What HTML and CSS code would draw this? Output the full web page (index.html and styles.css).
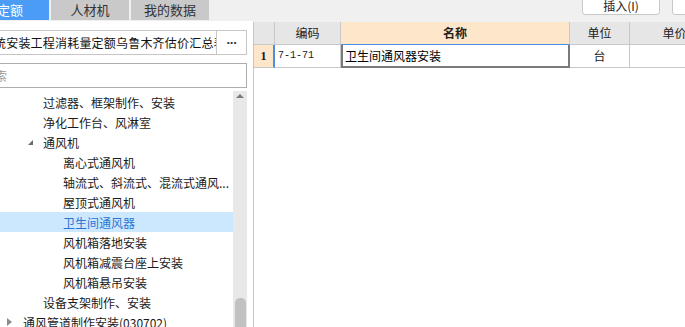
FILE: index.html
```html
<!DOCTYPE html>
<html lang="zh-CN">
<head>
  <meta charset="UTF-8">
  <title>定额库</title>
  <link rel="stylesheet" href="styles.css">
</head>
<body>
  <div class="app">
    <!-- Left: quota library tree -->
    <aside class="side">
      <div class="tabs">
        <span class="tab active">定额</span>
        <span class="tab">人材机</span>
        <span class="tab">我的数据</span>
      </div>

      <div class="picker">
        <div class="combo">统安装工程消耗量定额乌鲁木齐估价汇总表</div>
        <button class="more">···</button>
      </div>

      <div class="search"><span class="placeholder">搜索</span></div>

      <div class="tree-box">
        <ul class="tree">
          <li class="node lv1"><i class="arrow"></i>过滤器、框架制作、安装</li>
          <li class="node lv1"><i class="arrow"></i>净化工作台、风淋室</li>
          <li class="node lv1 open"><i class="arrow"></i>通风机</li>
          <li class="node lv2"><i class="arrow"></i>离心式通风机</li>
          <li class="node lv2"><i class="arrow"></i>轴流式、斜流式、混流式通风...</li>
          <li class="node lv2"><i class="arrow"></i>屋顶式通风机</li>
          <li class="node lv2 selected"><i class="arrow"></i>卫生间通风器</li>
          <li class="node lv2"><i class="arrow"></i>风机箱落地安装</li>
          <li class="node lv2"><i class="arrow"></i>风机箱减震台座上安装</li>
          <li class="node lv2"><i class="arrow"></i>风机箱悬吊安装</li>
          <li class="node lv1"><i class="arrow"></i>设备支架制作、安装</li>
          <li class="node lv0 closed"><i class="arrow"></i>通风管道制作安装(030702)</li>
        </ul>
        <div class="scrollbar">
          <span class="sb-up"></span>
          <span class="sb-thumb"></span>
        </div>
      </div>
    </aside>

    <!-- Right: selected quota items -->
    <main class="main">
      <div class="toolbar">
        <button class="tool-btn">插入(I)</button>
        <button class="tool-btn">替换(R)</button>
      </div>

      <div class="sheet">
        <div class="grid">
          <div class="cell head"></div>
          <div class="cell head">编码</div>
          <div class="cell head current">名称</div>
          <div class="cell head">单位</div>
          <div class="cell head">单价</div>

          <div class="cell rownum">1</div>
          <div class="cell code">7-1-71</div>
          <div class="cell name editing">卫生间通风器安装</div>
          <div class="cell unit">台</div>
          <div class="cell"></div>
        </div>
      </div>
    </main>
  </div>
</body>
</html>
```

FILE: styles.css
```css
body {
  margin: 0;
  font-family: "Noto Sans CJK SC", sans-serif;
  font-size: 12px;
  color: #1a1a1a;
  background: #fff;
  overflow: hidden;
}

.app {
  display: flex;
  width: 685px;
  height: 327px;
  overflow: hidden;
}

/* ---------- left pane ---------- */
.side {
  width: 253px;
  flex: none;
  display: flex;
  flex-direction: column;
  padding-right: 6px;
  box-sizing: border-box;
  background: #fff;
}

.tabs {
  display: flex;
  gap: 2px;
  height: 21px;
  margin-right: -6px;
  margin-left: -29px;
  background: #f0f0f0;
}

.tab {
  width: 78px;
  height: 20px;
  line-height: 19px;
  text-align: center;
  font-size: 13px;
  color: #333;
  background: #c9c9c9;
}

.tab.active {
  background: #4b9cf6;
  color: #fff;
}

.picker {
  display: flex;
  height: 25px;
  margin-top: 9px;
  margin-left: -8px;
}

.combo {
  flex: 1;
  min-width: 0;
  border: 1px solid #c6c6c6;
  padding-left: 1px;
  line-height: 23px;
  letter-spacing: 0.2px;
  white-space: nowrap;
  overflow: hidden;
  color: #111;
}

.more {
  width: 30px;
  border: 1px solid #c6c6c6;
  border-left: none;
  background: #fff;
  padding: 0;
  font-family: "Liberation Sans", sans-serif;
  font-size: 13px;
  font-weight: bold;
  color: #333;
  letter-spacing: -1px;
}

.search {
  height: 25px;
  margin-top: 8px;
  margin-left: -8px;
  border: 1px solid #adadad;
  box-sizing: border-box;
  line-height: 23px;
  font-size: 12px;
  text-indent: -10px;
  overflow: hidden;
  white-space: nowrap;
}

.search .placeholder {
  color: #9a9a9a;
}

.tree-box {
  flex: 1;
  display: flex;
  margin-top: 3px;
  overflow: hidden;
}

.tree {
  flex: 1;
  list-style: none;
  margin: 0;
  padding: 1px 0 0;
}

.node {
  display: flex;
  align-items: center;
  height: 20px;
  white-space: nowrap;
}

.node.lv0 { padding-left: 3px; }
.node.lv1 { padding-left: 23px; }
.node.lv2 { padding-left: 43px; }

.node.selected {
  background: #cce8ff;
  color: #2b74d4;
}

.arrow {
  width: 20px;
  flex: none;
  position: relative;
  height: 20px;
}

.node.open .arrow::before {
  content: '';
  position: absolute;
  left: 5px;
  top: 8px;
  border-left: 5px solid transparent;
  border-bottom: 5px solid #6a6a6a;
}

.node.closed .arrow::before {
  content: '';
  position: absolute;
  left: 4px;
  top: 6px;
  border-left: 5px solid #8c8c8c;
  border-top: 4px solid transparent;
  border-bottom: 4px solid transparent;
}

.scrollbar {
  width: 14px;
  flex: none;
  position: relative;
  background: #e8e8e8;
}

.sb-up {
  position: absolute;
  left: 3px;
  top: 3px;
  border-left: 4px solid transparent;
  border-right: 4px solid transparent;
  border-bottom: 4px solid #7a7a7a;
}

.sb-thumb {
  position: absolute;
  left: 2px;
  right: 1px;
  top: 207px;
  height: 60px;
  border-radius: 5px 5px 0 0;
  background: #c1c1c1;
}

/* ---------- right pane ---------- */
.main {
  flex: 1;
  min-width: 0;
  display: flex;
  flex-direction: column;
}

.toolbar {
  height: 22px;
  flex: none;
  display: flex;
  justify-content: flex-end;
  gap: 12px;
  margin-right: -65px;
  background: #f0f0f0;
}

.tool-btn {
  width: 78px;
  height: 19px;
  margin-top: -4px;
  padding: 0;
  border: 1px solid #c8c8c8;
  border-radius: 3px;
  background: #fff;
  font-family: "Noto Sans CJK SC", sans-serif;
  font-size: 12px;
  line-height: 17px;
  color: #222;
}

.sheet {
  flex: 1;
  border-left: 1px solid #c8c8c8;
  overflow: hidden;
}

.grid {
  display: grid;
  grid-template-columns: 21px 66px 229px 60px 90px;
  grid-auto-rows: 23px;
}

.cell {
  box-sizing: border-box;
  border-right: 1px solid #c8c8c8;
  border-bottom: 1px solid #c8c8c8;
  line-height: 22px;
  white-space: nowrap;
  overflow: hidden;
}

.cell.head {
  background: #e6e6e6;
  text-align: center;
  color: #222;
}

.cell.head.current {
  background: #fde6c9;
  border-bottom-color: #4a90e2;
  font-weight: bold;
}

.cell.rownum {
  background: #fde6c9;
  border-right: 2px solid #4a90e2;
  text-align: center;
  font-family: "Liberation Serif", serif;
  font-weight: bold;
  font-size: 12px;
}

.cell.code {
  padding-left: 3px;
  font-family: "Liberation Mono", monospace;
  font-size: 10px;
}

.cell.name {
  padding-left: 2px;
  color: #000;
}

.cell.name.editing {
  border: 2px solid #7a7a7a;
  border-top: none;
}

.cell.unit {
  text-align: center;
}
```
